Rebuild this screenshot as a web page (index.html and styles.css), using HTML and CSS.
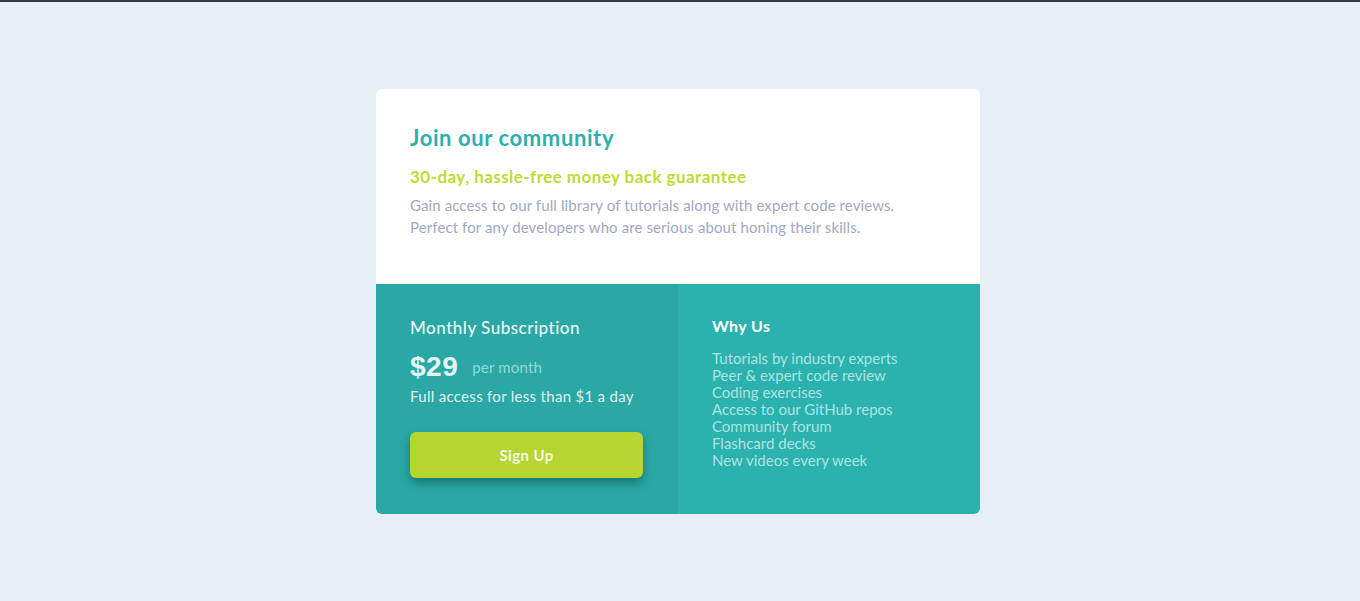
FILE: index.html
```html
<!DOCTYPE html>
<html lang="en">
<head>
<meta charset="utf-8">
<title>Single price grid</title>
<link rel="stylesheet" href="styles.css">
</head>
<body>
<main class="page">
  <section class="card">
    <div class="intro">
      <h1 class="title">Join our community</h1>
      <h2 class="guarantee">30-day, hassle-free money back guarantee</h2>
      <p class="desc">Gain access to our full library of tutorials along with expert code reviews.<br>Perfect for any developers who are serious about honing their skills.</p>
    </div>
    <div class="bottom">
      <div class="sub">
        <h3 class="sub-title">Monthly Subscription</h3>
        <div class="price"><span class="amount">$29</span><span class="per">per month</span></div>
        <p class="access">Full access for less than $1 a day</p>
        <button class="signup">Sign Up</button>
      </div>
      <div class="why">
        <h3 class="why-title">Why Us</h3>
        <ul class="why-list">
          <li>Tutorials by industry experts</li>
          <li>Peer &amp; expert code review</li>
          <li>Coding exercises</li>
          <li>Access to our GitHub repos</li>
          <li>Community forum</li>
          <li>Flashcard decks</li>
          <li>New videos every week</li>
        </ul>
      </div>
    </div>
  </section>
</main>
</body>
</html>
```
FILE: styles.css
```css
* { box-sizing: border-box; }
html, body { margin: 0; padding: 0; }
body {
  background: #e6eef6;
  border-top: 2px solid #3a3a3a;
  font-family: "Lato", "Liberation Sans", sans-serif;
  min-height: 601px;
}
.page {
  display: flex;
  justify-content: center;
  padding: 87px 4px 0 0;
}
.card {
  width: 604px;
  border-radius: 6px;
  overflow: hidden;
  background: #fff;
}
.intro {
  padding: 36px 34px 0;
  height: 195px;
}
.title {
  margin: 0;
  font-size: 22px;
  font-weight: 700;
  color: #2bb0ad;
  letter-spacing: 0.6px;
  line-height: 26px;
}
.guarantee {
  margin: 15px 0 0;
  font-size: 17px;
  font-weight: 700;
  color: #bcdc35;
  letter-spacing: 0.45px;
  line-height: 22px;
}
.desc {
  margin: 6px 0 0;
  font-size: 15px;
  letter-spacing: 0.1px;
  line-height: 22px;
  color: #9fa9c3;
}
.bottom {
  display: flex;
  height: 230px;
}
.sub {
  width: 302px;
  background: #29a8a5;
  padding: 33px 34px 0;
}
.why {
  flex: 1;
  background: #2bb1ae;
  padding: 32px 34px 0;
}
.sub-title {
  margin: 0;
  color: #ecf7f7;
  font-size: 17px;
  font-weight: 500;
  letter-spacing: 0.5px;
  line-height: 22px;
}
.price {
  display: flex;
  align-items: center;
  margin-top: 14px;
  height: 28px;
}
.amount {
  font-family: "Liberation Sans", sans-serif;
  font-weight: 700;
  font-size: 28px;
  letter-spacing: 0.5px;
  color: #e6f3f3;
}
.per {
  margin-left: 14px;
  font-size: 15px;
  letter-spacing: 0.2px;
  color: #98d8d6;
}
.access {
  margin: 6px 0 0;
  font-size: 15px;
  letter-spacing: 0.3px;
  color: #e2f2f2;
  line-height: 19px;
}
.signup {
  display: block;
  margin-top: 26px;
  width: 233px;
  height: 46px;
  border: none;
  border-radius: 6px;
  background: #b7d531;
  color: #f4f7ea;
  font-family: inherit;
  font-weight: 700;
  font-size: 15px;
  letter-spacing: 0.4px;
  box-shadow: 0 5px 10px rgba(0, 60, 60, 0.45);
}
.why-title {
  margin: 0;
  color: #fff;
  font-size: 16px;
  font-weight: 700;
  letter-spacing: 0.4px;
  line-height: 20px;
}
.why-list {
  list-style: none;
  margin: 14px 0 0;
  padding: 0;
  font-size: 15px;
  line-height: 17px;
  color: #aee4e2;
}
```
